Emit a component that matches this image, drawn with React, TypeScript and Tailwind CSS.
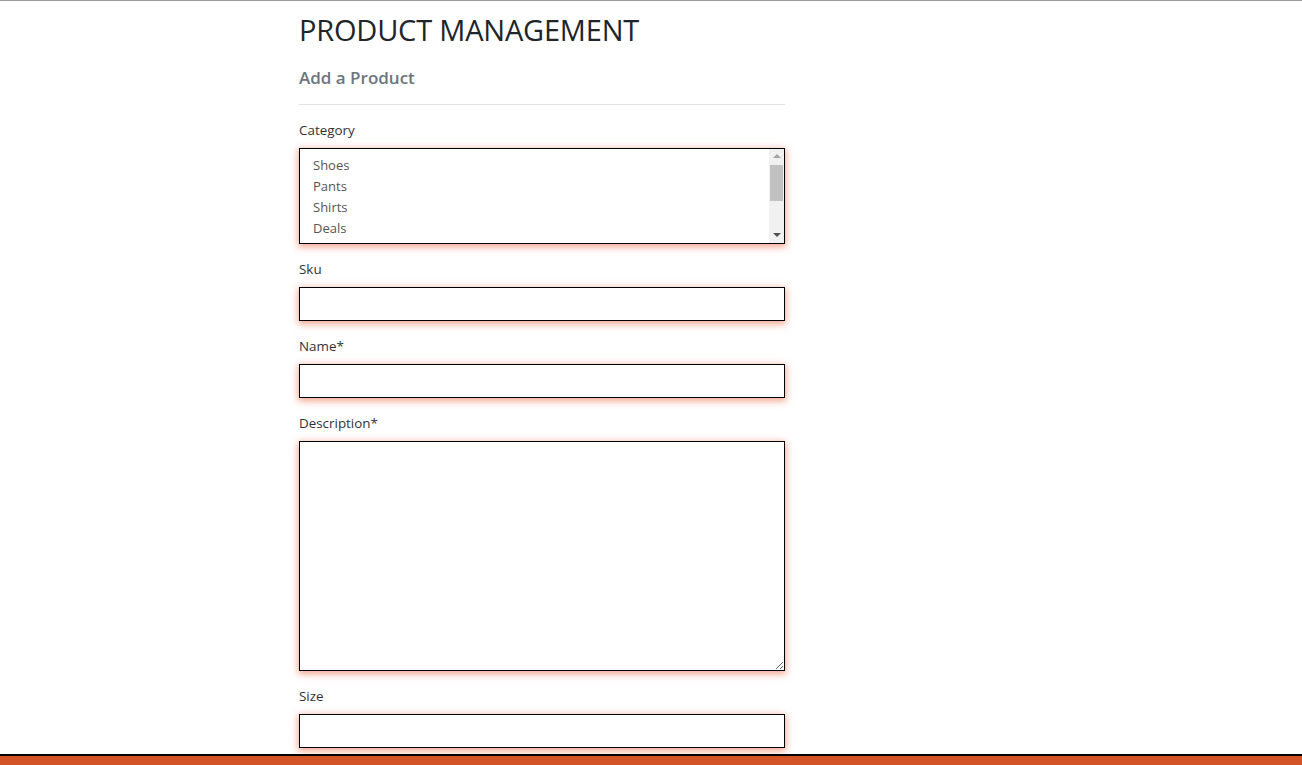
import { ReactNode } from "react";

const categories = ["Shoes", "Pants", "Shirts", "Deals"];

const glow = "shadow-[0_2px_7px_1px_rgba(236,112,76,0.62)]";

function Field({ label, children }: { label: string; children: ReactNode }) {
  return (
    <div className="flex flex-col">
      <label className="text-[13.4px] leading-[18px] text-[#333]">{label}</label>
      <div className="mt-[9px]">{children}</div>
    </div>
  );
}

function TextInput() {
  return (
    <input
      type="text"
      className={`block h-[34px] w-full border border-black bg-white px-3 text-sm outline-none ${glow}`}
    />
  );
}

function CategoryList() {
  return (
    <div className={`flex h-[96px] w-full border border-black bg-white ${glow}`}>
      <ul className="flex-1 overflow-hidden pt-[6px] pl-[13px] text-[13px] leading-[21px] text-[#555]">
        {categories.map((c) => (
          <li key={c}>{c}</li>
        ))}
      </ul>
      <div className="flex w-[15px] flex-col items-center bg-[#f1f1f1]">
        <span className="mt-[5px] h-0 w-0 border-x-[4px] border-b-[4px] border-x-transparent border-b-[#a3a3a3]" />
        <span className="mt-[7px] h-[36px] w-[13px] bg-[#c1c1c1]" />
        <span className="mt-auto mb-[6px] h-0 w-0 border-x-[4px] border-t-[4px] border-x-transparent border-t-[#505050]" />
      </div>
    </div>
  );
}

export default function App() {
  return (
    <div className="h-screen overflow-hidden border-t border-[#9a9a9a] bg-white font-['Open_Sans',sans-serif]">
      <main className="ml-[299px] w-[486px] pb-10">
        <h1 className="mt-[10px] text-[29px] leading-[38px] font-normal tracking-[-0.2px] text-[#212529]">
          PRODUCT MANAGEMENT
        </h1>
        <h2 className="mt-[17px] text-[17px] leading-[24px] font-semibold text-[#6c757d]">
          Add a Product
        </h2>
        <hr className="mt-[14px] border-t border-[#e3e3e3]" />
        <div className="mt-[16px] flex flex-col gap-[16px]">
          <Field label="Category">
            <CategoryList />
          </Field>
          <Field label="Sku">
            <TextInput />
          </Field>
          <Field label="Name*">
            <TextInput />
          </Field>
          <Field label="Description*">
            <textarea
              className={`block h-[230px] w-full border border-black bg-white px-3 py-2 text-sm outline-none ${glow}`}
            />
          </Field>
          <Field label="Size">
            <TextInput />
          </Field>
        </div>
      </main>
      <footer className="fixed inset-x-0 bottom-0 h-[11px] border-t-2 border-black bg-[#d35427]" />
    </div>
  );
}
